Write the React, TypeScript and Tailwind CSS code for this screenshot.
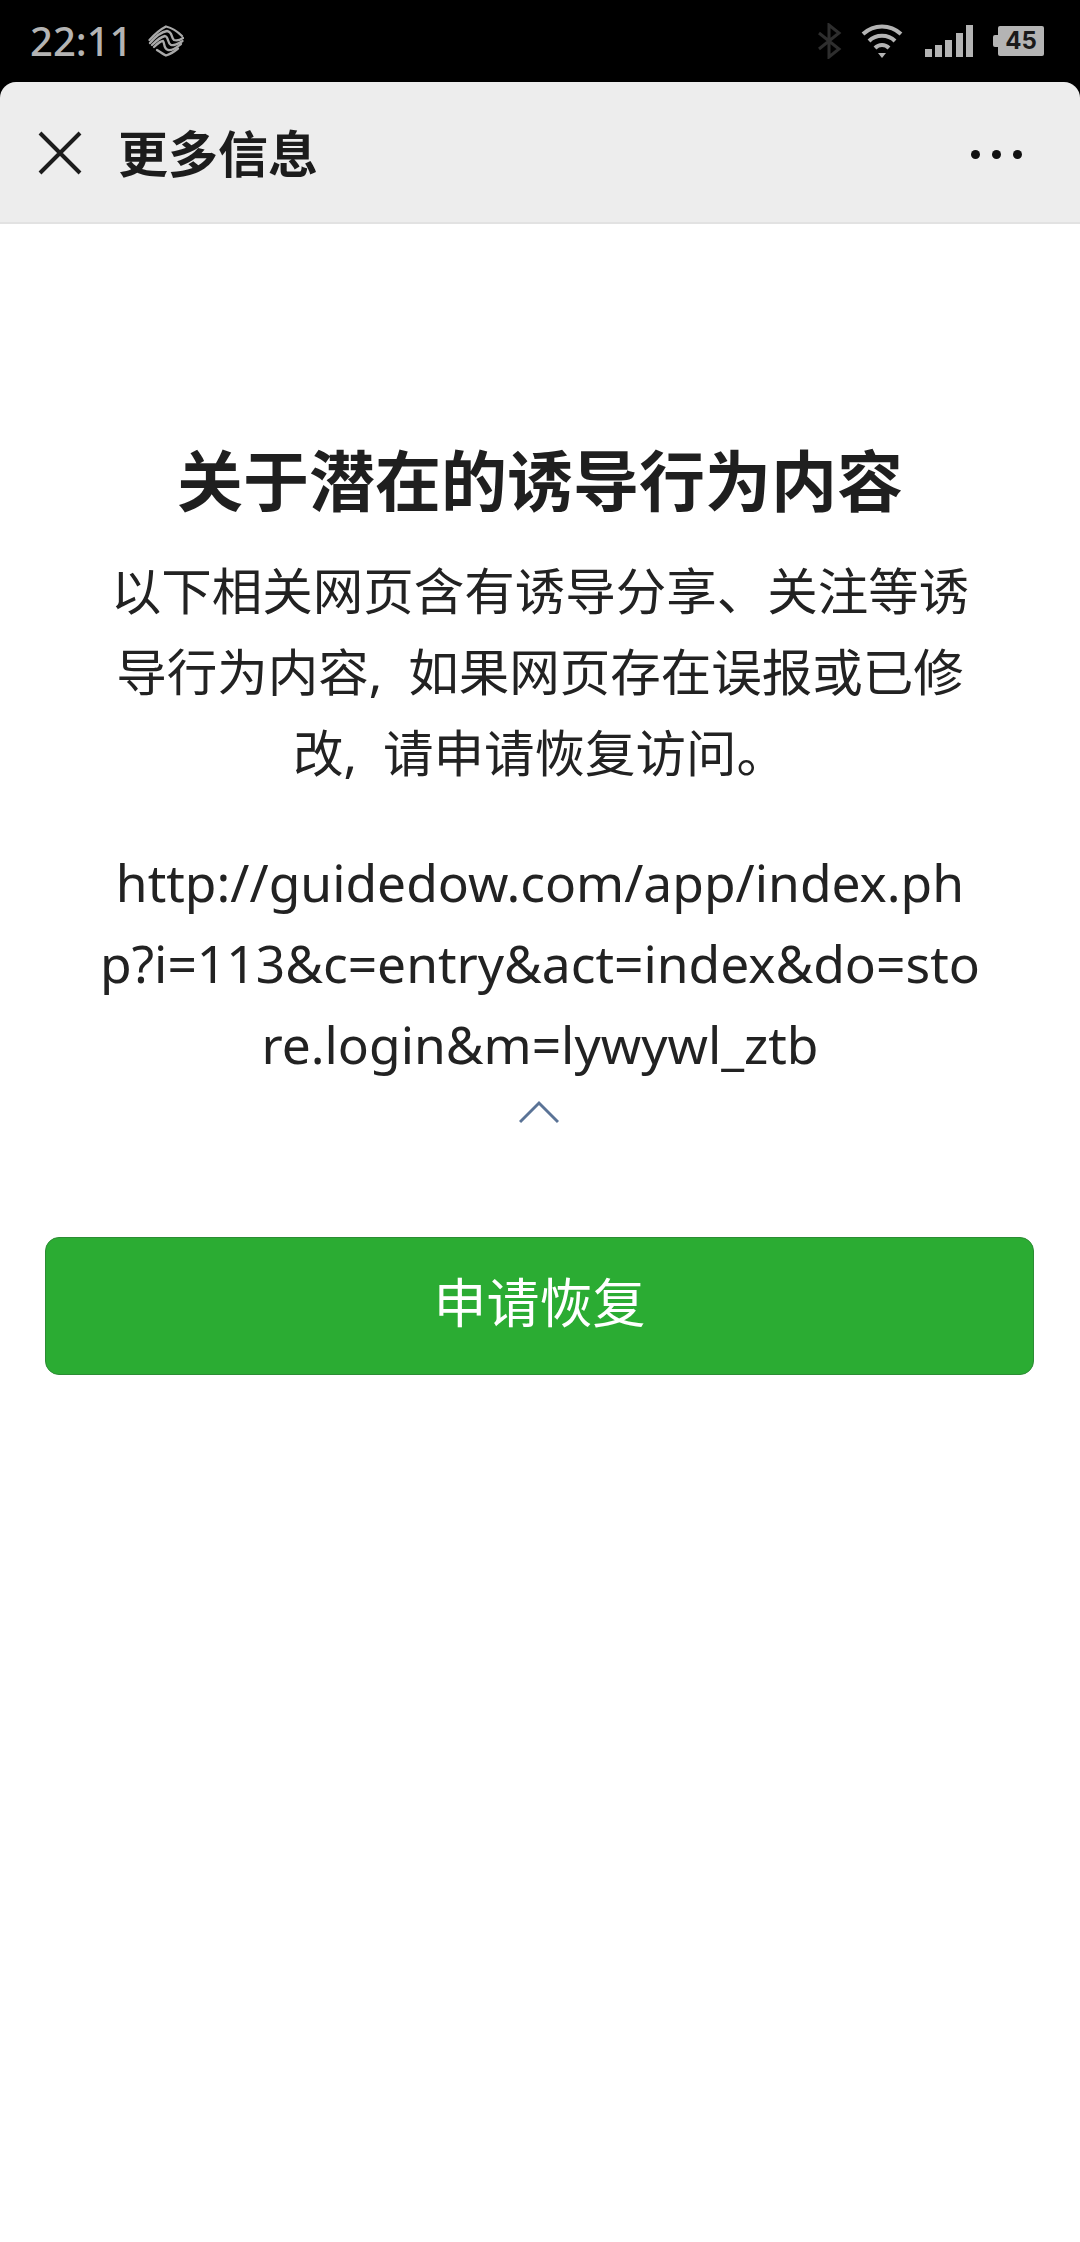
const font = "font-['Noto_Sans','Noto_Sans_CJK_SC',sans-serif]";

function CarrierIcon() {
  return (
    <svg width="36" height="32" viewBox="0 0 36 32" fill="none" stroke="#a9a9a9" strokeWidth="2.3" strokeLinecap="round">
      <path d="M1.5 15 C6 10 11 5 18 1.5 C24 3 30 7 34 11" />
      <path d="M2 18 C7 12 13 7 19 6 C25 7 23 13 26 15 C29 16 32 15 35 13" />
      <path d="M4 20 C8 16 12 12 17 11 C21 12 19 18 23 20 C27 21 31 18 34.5 16" />
      <path d="M6 22 C9 19 12 16 15 16 C17 18 15 23 20 25 C25 26 29 22 33 19" />
      <path d="M9 25 C12 27 15 29 18 30.5 C23 29 27 26 30 23.5" />
    </svg>
  );
}

function BluetoothIcon() {
  return (
    <svg width="26" height="36" viewBox="0 0 26 36" fill="none" stroke="#2e2e2e" strokeWidth="3">
      <path d="M2 10 L22 26 L12 34 L12 2 L22 10 L2 26" />
    </svg>
  );
}

function WifiIcon() {
  return (
    <svg width="42" height="34" viewBox="0 0 42 34" fill="none" stroke="#b4b4b4" strokeWidth="4">
      <path d="M2 10 C13 0 29 0 40 10" />
      <path d="M8 17 C15 10 27 10 34 17" />
      <path d="M14 24 C18 20 24 20 28 24" />
      <path d="M17 29 H25 L21 34 Z" fill="#b4b4b4" stroke="none" />
    </svg>
  );
}

function SignalIcon() {
  return (
    <svg width="48" height="32" viewBox="0 0 48 32" fill="#b4b4b4">
      <rect x="0" y="24" width="7" height="8" />
      <rect x="10" y="20" width="7" height="12" />
      <rect x="20" y="15" width="7" height="17" />
      <rect x="31" y="8" width="7" height="24" />
      <rect x="41" y="0" width="7" height="32" />
    </svg>
  );
}

function StatusBar() {
  return (
    <div className="flex h-[82px] items-center justify-between bg-black pl-[30px] pr-[36px]">
      <div className="flex items-center gap-[16px]">
        <span className="font-['Noto_Sans',sans-serif] text-[40px] font-medium leading-none text-[#b4b4b4]">22:11</span>
        <CarrierIcon />
      </div>
      <div className="flex items-center">
        <BluetoothIcon />
        <div className="ml-[18px]"><WifiIcon /></div>
        <div className="ml-[22px]"><SignalIcon /></div>
        <div className="ml-[20px] flex items-center">
          <div className="h-[12px] w-[5px] rounded-l-[2px] bg-[#b4b4b4]" />
          <div className="flex h-[30px] w-[46px] items-center justify-center rounded-[2px] bg-[#b4b4b4] font-['Inter',sans-serif] text-[24px] font-bold leading-none text-[#1a1a1a]">45</div>
        </div>
      </div>
    </div>
  );
}

function Header() {
  return (
    <div className="flex h-[142px] items-center justify-between rounded-t-[16px] border-b-2 border-[#e2e2e2] bg-[#ededed] pl-[38px] pr-[58px]">
      <div className="flex items-center">
        <svg className="mt-[2px]" width="44" height="44" viewBox="0 0 44 44" stroke="#1c1c1c" strokeWidth="4" fill="none">
          <path d="M2 2 L42 42 M42 2 L2 42" />
        </svg>
        <span className={`${font} ml-[36px] pt-[4px] text-[50px] font-bold leading-none text-[#1c1c1c]`}>更多信息</span>
      </div>
      <div className="flex items-center gap-[12px] pt-[4px]">
        <div className="h-[9px] w-[9px] rounded-full bg-[#111]" />
        <div className="h-[9px] w-[9px] rounded-full bg-[#111]" />
        <div className="h-[9px] w-[9px] rounded-full bg-[#111]" />
      </div>
    </div>
  );
}

export default function App() {
  return (
    <div className={`${font} h-[2242px] w-[1080px] overflow-hidden bg-black`}>
      <StatusBar />
      <Header />
      <main className="h-[2018px] bg-white pt-[215px]">
        <h1 className="text-center text-[66px] font-bold leading-[82px] text-[#1f1f1f]">关于潜在的诱导行为内容</h1>
        <p className="mx-auto mt-[29px] w-[880px] text-center text-[50.5px] leading-[81px] text-[#222] [word-spacing:13px]">
          以下相关网页含有诱导分享、关注等诱导行为内容, 如果网页存在误报或已修改, 请申请恢复访问。
        </p>
        <p className="mt-[49px] text-center text-[51.5px] leading-[81px] text-[#222]">
          http://guidedow.com/app/index.ph<br />
          p?i=113&amp;c=entry&amp;act=index&amp;do=sto<br />
          re.login&amp;m=lywywl_ztb
        </p>
        <div className="mt-[15px] flex justify-center pr-[2px]">
          <svg width="40" height="24" viewBox="0 0 40 24" fill="none" stroke="#5a7396" strokeWidth="3">
            <path d="M1 22 L20 3 L39 22" />
          </svg>
        </div>
        <button className="mx-[45px] mt-[113px] flex h-[138px] w-[989px] items-center justify-center rounded-[14px] border border-[#2c8c34] bg-[#2bac33] pb-[7px] text-[53px] leading-none text-white">
          申请恢复
        </button>
      </main>
    </div>
  );
}
